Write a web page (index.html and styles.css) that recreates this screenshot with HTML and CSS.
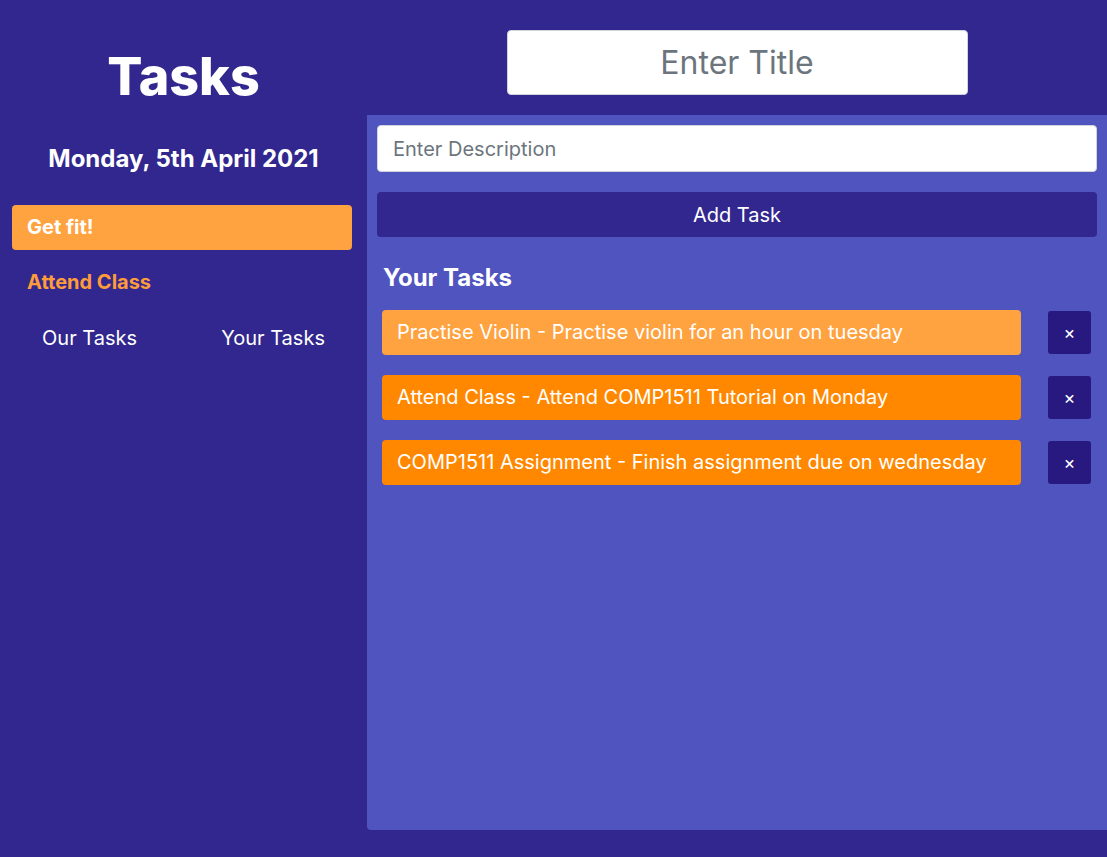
FILE: index.html
```html
<!DOCTYPE html>
<html>
<head>
<meta charset="utf-8">
<link rel="stylesheet" href="styles.css">
</head>
<body>
<div class="app">
  <aside class="sidebar">
    <h1 class="brand">Tasks</h1>
    <div class="date">Monday, 5th April 2021</div>
    <ul class="goals">
      <li class="goal goal-active">Get fit!</li>
      <li class="goal">Attend Class</li>
    </ul>
    <nav class="nav">
      <a class="nav-link">Our Tasks</a>
      <a class="nav-link">Your Tasks</a>
    </nav>
  </aside>
  <main class="main">
    <header class="title-bar">
      <input class="title-input" type="text" placeholder="Enter Title">
    </header>
    <section class="panel">
      <input class="desc-input" type="text" placeholder="Enter Description">
      <button class="add-btn">Add Task</button>
      <h2 class="panel-heading">Your Tasks</h2>
      <ul class="task-list">
        <li class="task-row">
          <div class="task task-hover">Practise Violin - Practise violin for an hour on tuesday</div>
          <button class="del-btn">×</button>
        </li>
        <li class="task-row">
          <div class="task">Attend Class - Attend COMP1511 Tutorial on Monday</div>
          <button class="del-btn">×</button>
        </li>
        <li class="task-row">
          <div class="task">COMP1511 Assignment - Finish assignment due on wednesday</div>
          <button class="del-btn">×</button>
        </li>
      </ul>
    </section>
  </main>
</div>
</body>
</html>
```

FILE: styles.css
```css
* { box-sizing: border-box; }
html, body {
  margin: 0;
  padding: 0;
  height: 100%;
  background: #31278e;
  font-family: Inter, "Noto Sans", sans-serif;
  color: #fff;
}
.app {
  display: flex;
  height: 857px;
}
.sidebar {
  width: 367px;
  flex: 0 0 367px;
  display: flex;
  flex-direction: column;
}
.brand {
  margin: 47px 0 0;
  height: 60px;
  line-height: 60px;
  font-size: 52px;
  font-weight: 800;
  text-align: center;
}
.date {
  margin-top: 39px;
  height: 26px;
  line-height: 26px;
  font-size: 24px;
  font-weight: 700;
  text-align: center;
}
.goals {
  list-style: none;
  margin: 33px 15px 0 12px;
  padding: 0;
  display: flex;
  flex-direction: column;
  gap: 10px;
}
.goal {
  height: 45px;
  line-height: 45px;
  padding: 0 15px;
  border-radius: 4px;
  font-size: 20px;
  font-weight: 700;
  color: #fe9c3c;
}
.goal-active {
  background: #ffa240;
  color: #fff;
}
.nav {
  display: flex;
  justify-content: space-around;
  margin-top: 10px;
  height: 45px;
  align-items: center;
}
.nav-link {
  font-size: 20px;
  color: #fff;
}
.main {
  flex: 1;
  display: flex;
  flex-direction: column;
  min-width: 0;
}
.title-bar {
  height: 115px;
  flex: 0 0 115px;
  display: flex;
  justify-content: center;
  padding-top: 30px;
}
.title-input {
  width: 461px;
  height: 65px;
  border: 1px solid #ced4da;
  border-radius: 4px;
  background: #fff;
  font-family: inherit;
  font-size: 32px;
  text-align: center;
  color: #495057;
  outline: none;
}
.title-input::placeholder { color: #6c757d; }
.panel {
  flex: 1;
  margin-bottom: 27px;
  background: #4f54bf;
  border-bottom-left-radius: 4px;
  padding: 10px 10px 0;
  display: flex;
  flex-direction: column;
}
.desc-input {
  height: 47px;
  border: 1px solid #ced4da;
  border-radius: 4px;
  background: #fff;
  font-family: inherit;
  font-size: 20px;
  padding: 0 15px;
  color: #495057;
  outline: none;
}
.desc-input::placeholder { color: #6c757d; }
.add-btn {
  margin-top: 20px;
  height: 45px;
  border: none;
  border-radius: 4px;
  background: #31278e;
  color: #fff;
  font-family: inherit;
  font-size: 20px;
}
.panel-heading {
  margin: 27px 0 0 6px;
  height: 28px;
  line-height: 28px;
  font-size: 24px;
  font-weight: 700;
}
.task-list {
  list-style: none;
  margin: 18px 0 0;
  padding: 0 6px 0 5px;
  display: flex;
  flex-direction: column;
  gap: 20px;
}
.task-row {
  display: flex;
  align-items: center;
  gap: 27px;
}
.task {
  flex: 1;
  height: 45px;
  line-height: 45px;
  padding: 0 15px;
  border-radius: 4px;
  background: #ff8800;
  font-size: 20px;
  white-space: nowrap;
}
.task-hover { background: #ffa240; }
.del-btn {
  width: 43px;
  height: 43px;
  flex: 0 0 43px;
  border: none;
  border-radius: 3px;
  background: #27197f;
  color: #fff;
  font-family: inherit;
  font-size: 18px;
  padding: 0;
}
```
